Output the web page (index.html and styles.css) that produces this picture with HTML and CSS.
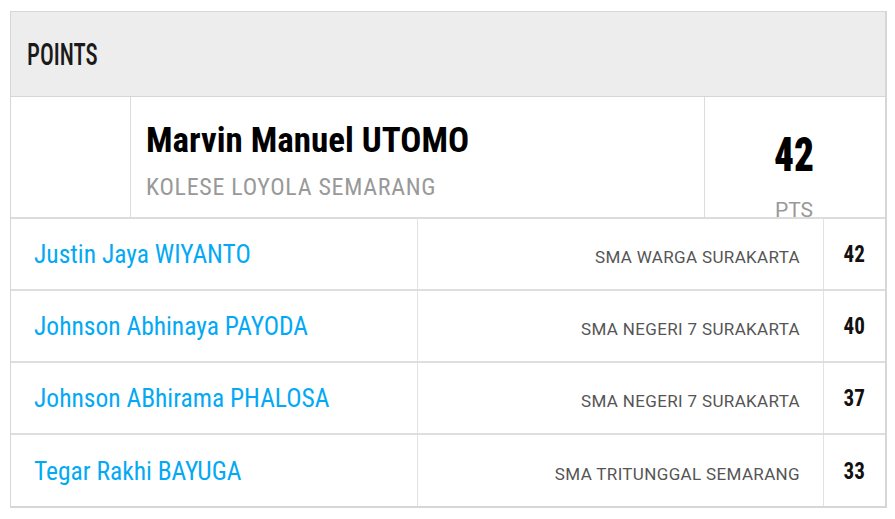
FILE: index.html
```html
<!DOCTYPE html>
<html>
<head>
<meta charset="utf-8">
<link rel="stylesheet" href="styles.css">
</head>
<body>
<div class="card">
  <div class="card-head"><h2 class="title">POINTS</h2></div>
  <div class="top">
    <div class="top-blank"></div>
    <div class="top-info">
      <div class="top-name">Marvin Manuel UTOMO</div>
      <div class="top-school">KOLESE LOYOLA SEMARANG</div>
    </div>
    <div class="top-pts">
      <div class="top-num">42</div>
      <div class="top-lbl">PTS</div>
    </div>
  </div>
  <div class="row">
    <div class="cell name"><a href="#">Justin Jaya WIYANTO</a></div>
    <div class="cell school">SMA WARGA SURAKARTA</div>
    <div class="cell pts"><span class="pts-num">42</span></div>
  </div>
  <div class="row">
    <div class="cell name"><a href="#">Johnson Abhinaya PAYODA</a></div>
    <div class="cell school">SMA NEGERI 7 SURAKARTA</div>
    <div class="cell pts"><span class="pts-num">40</span></div>
  </div>
  <div class="row">
    <div class="cell name"><a href="#">Johnson ABhirama PHALOSA</a></div>
    <div class="cell school">SMA NEGERI 7 SURAKARTA</div>
    <div class="cell pts"><span class="pts-num">37</span></div>
  </div>
  <div class="row">
    <div class="cell name"><a href="#">Tegar Rakhi BAYUGA</a></div>
    <div class="cell school">SMA TRITUNGGAL SEMARANG</div>
    <div class="cell pts"><span class="pts-num">33</span></div>
  </div>
</div>
</body>
</html>
```
FILE: styles.css
```css
* { box-sizing: border-box; }
html, body { margin: 0; padding: 0; background: #fff; }
body { font-family: Roboto, "Liberation Sans", sans-serif; }
.card {
  margin: 11px 0 0 10px;
  width: 877px;
  border: 1px solid #d6d6d6;
  border-right-width: 2px;
  border-bottom-width: 2px;
}
.card-head {
  height: 85px;
  background: #ededed;
  border-bottom: 1px solid #d6d6d6;
  display: flex;
  align-items: center;
  padding-left: 16px;
}
.title {
  margin: 0;
  display: inline-block;
  font-family: Roboto, sans-serif;
  font-stretch: 75%;
  font-weight: 500;
  font-size: 31px;
  line-height: 34px;
  color: #1a1a1a;
  transform: scaleX(0.74);
  transform-origin: left center;
  padding-top: 2px;
}
.top {
  display: grid;
  grid-template-columns: 120px 1fr 180px;
  height: 122px;
  border-bottom: 2px solid #dcdcdc;
}
.top-blank { border-right: 1px solid #dcdcdc; }
.top-info {
  border-right: 1px solid #dcdcdc;
  padding: 23px 0 0 15px;
}
.top-name {
  font-stretch: 75%;
  font-weight: 700;
  font-size: 35px;
  color: #000;
  line-height: 42px;
}
.top-school {
  font-stretch: 75%;
  font-size: 24px;
  letter-spacing: 0.7px;
  color: #999;
  line-height: 30px;
  margin-top: 10px;
}
.top-pts {
  overflow: hidden;
  text-align: center;
  padding-top: 32px;
  padding-right: 2px;
}
.top-num {
  display: inline-block;
  font-stretch: 75%;
  font-weight: 900;
  font-size: 49px;
  line-height: 52px;
  color: #000;
  transform: scaleX(0.8);
}
.top-lbl {
  font-size: 21px;
  color: #999;
  line-height: 24px;
  margin-top: 17px;
}
.row {
  display: grid;
  grid-template-columns: 407px 1fr 61px;
  height: 72px;
  border-bottom: 2px solid #dedede;
}
.row:last-child { border-bottom: 0; height: 71px; }
.cell { display: flex; align-items: center; }
.name {
  padding-left: 23px;
  border-right: 1px solid #e2e2e2;
}
.name a {
  color: #03a9f4;
  text-decoration: none;
  font-stretch: 75%;
  font-size: 25.5px;
}
.school {
  justify-content: flex-end;
  padding-right: 23px;
  padding-top: 6px;
  border-right: 1px solid #e2e2e2;
  font-size: 17px;
  letter-spacing: 0.35px;
  color: #555;
}
.pts { justify-content: center; }
.pts-num {
  display: inline-block;
  font-stretch: 75%;
  font-weight: 700;
  font-size: 24px;
  color: #111;
  transform: scaleX(0.88);
}
```
